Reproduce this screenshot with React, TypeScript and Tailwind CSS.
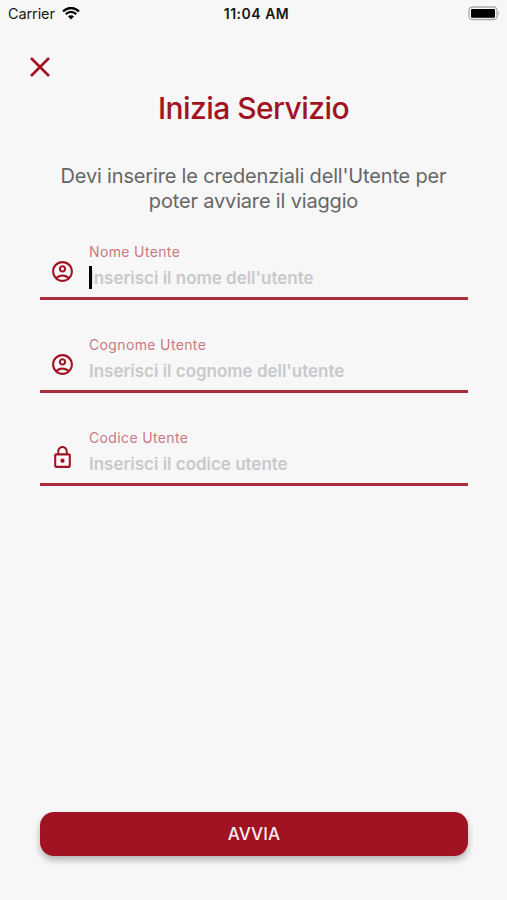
import { MdLockOutline, MdOutlineAccountCircle } from 'react-icons/md';
import type { IconType } from 'react-icons';

type FieldProps = {
  label: string;
  placeholder: string;
  icon: IconType;
  focused?: boolean;
};

function Field({ label, placeholder, icon: Icon, focused }: FieldProps) {
  return (
    <div className="h-[93.2px]">
      <div className="flex h-[57px] border-b-3 border-[#ab2c3a]">
        <div className="flex w-[49px] shrink-0 pt-[15.5px] pl-[9.5px]">
          <Icon className="size-[25px] text-[#a11322]" />
        </div>
        <div className="flex flex-col whitespace-nowrap">
          <span className="h-[21px] text-[14px] leading-[18px] tracking-[0.36px] text-[#cb7884]">{label}</span>
          <div className="relative h-6">
            <span className="block pt-px text-[17px] leading-[27px] font-semibold tracking-[-0.02px] text-[#c8c9cb]">{placeholder}</span>
            {focused && <span className="absolute top-0.5 left-0 h-[23px] w-[2.5px] bg-black" />}
          </div>
        </div>
      </div>
    </div>
  );
}

export default function App() {
  return (
    <main className="flex h-[900px] w-[507px] flex-col overflow-hidden bg-[#f7f7f7] font-['Inter','Liberation_Sans',sans-serif]">
      <header className="grid h-7 grid-cols-3 items-center pr-[6px] pl-2 text-[#171717]">
        <div className="flex items-center gap-[7px]">
          <span className="text-[14.5px] leading-7 tracking-[-0.1px]">Carrier</span>
          <svg viewBox="0 0 18 13" className="h-[13px] w-[18px] -translate-y-px" fill="none">
            <path d="M1 4.3Q9-2.4 17 4.3" stroke="#000" strokeWidth="2.3" />
            <path d="M3.7 7.2Q9 2.7 14.3 7.2" stroke="#000" strokeWidth="2.2" />
            <path d="M5.9 9.3Q9 7 12.1 9.3L9 12.5Z" fill="#000" />
          </svg>
        </div>
        <span className="pl-1 text-center text-[14px] leading-7 font-semibold tracking-[0.5px]">11:04 AM</span>
        <svg viewBox="0 0 33 15" className="h-[15px] w-[33px] -translate-y-px justify-self-end">
          <rect x="1" y="1" width="28" height="12.5" rx="3.5" fill="#f7f7f7" stroke="#aaa" strokeWidth="1.3" />
          <rect x="3" y="3" width="24" height="8.7" rx="1" fill="#000" />
          <path d="M30.3 5.3Q32.5 7.2 30.3 9.2Z" fill="#aaa" />
        </svg>
      </header>

      <div className="flex h-[63px] pt-[29px] pl-[30px]">
        <button aria-label="Chiudi" className="size-5">
          <svg viewBox="0 0 20 20" className="size-5" fill="none" stroke="#a11322" strokeWidth="2.6">
            <path d="M1 1L19 19M19 1L1 19" />
          </svg>
        </button>
      </div>

      <h1 className="h-[73px] text-center text-[30px] leading-[35px] font-medium tracking-[-0.55px] text-[#a11322]">Inizia Servizio</h1>
      <p className="h-[79px] text-center text-[20px] leading-[24.5px] tracking-[-0.17px] text-[#666]">
        Devi inserire le credenziali dell'Utente per<br />poter avviare il viaggio
      </p>

      <form className="flex flex-1 flex-col pr-[39px] pl-10">
        <Field label="Nome Utente" placeholder="Inserisci il nome dell'utente" icon={MdOutlineAccountCircle} focused />
        <Field label="Cognome Utente" placeholder="Inserisci il cognome dell'utente" icon={MdOutlineAccountCircle} />
        <Field label="Codice Utente" placeholder="Inserisci il codice utente" icon={MdLockOutline} />
      </form>

      <footer className="pr-[39px] pb-[44px] pl-10">
        <button type="button" className="h-11 w-full rounded-[14px] bg-[#a11322] pt-0.5 text-[17px] font-medium tracking-[0.15px] text-[#fbeef0] shadow-[0_4px_7px_rgba(0,0,0,0.28)]">AVVIA</button>
      </footer>
    </main>
  );
}
